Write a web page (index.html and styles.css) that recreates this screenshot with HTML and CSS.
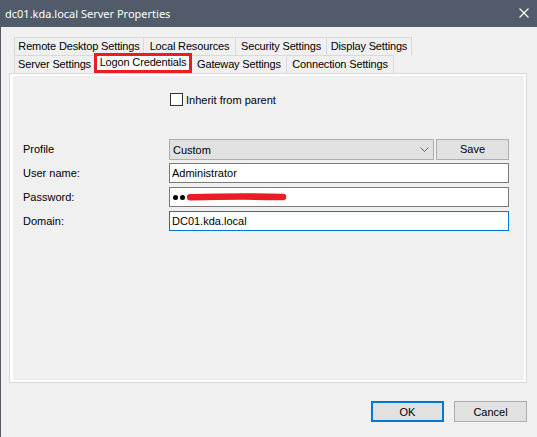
FILE: index.html
```html
<!DOCTYPE html>
<html>
<head>
<meta charset="utf-8">
<link rel="stylesheet" href="styles.css">
</head>
<body>
<div class="window">
  <div class="titlebar">
    <span class="title">dc01.kda.local Server Properties</span>
    <svg class="close" width="10" height="10" viewBox="0 0 10 10"><path d="M0.5 0.5 L9.5 9.5 M9.5 0.5 L0.5 9.5" stroke="#fff" stroke-width="1.1" fill="none"/></svg>
  </div>
  <div class="body">
    <div class="tabstrip">
      <div class="tab-row">
        <div class="tab w-remote">Remote Desktop Settings</div>
        <div class="tab w-local">Local Resources</div>
        <div class="tab w-security">Security Settings</div>
        <div class="tab w-display">Display Settings</div>
      </div>
      <div class="tab-row">
        <div class="tab w-server">Server Settings</div>
        <div class="tab tab-selected w-logon">Logon Credentials</div>
        <div class="tab w-gateway">Gateway Settings</div>
        <div class="tab w-connection">Connection Settings</div>
      </div>
    </div>
    <div class="panel">
      <div class="page">
        <div class="check-row">
          <span class="checkbox"></span>
          <span class="check-label">Inherit from parent</span>
        </div>
        <div class="form">
          <div class="label">Profile</div>
          <div class="profile-controls">
            <div class="combo">
              <span>Custom</span>
              <svg class="chevron" width="9" height="5" viewBox="0 0 9 5"><path d="M0.5 0.5 L4.5 4.5 L8.5 0.5" stroke="#5f5f5f" stroke-width="1" fill="none"/></svg>
            </div>
            <div class="button save">Save</div>
          </div>
          <div class="label">User name:</div>
          <div class="textbox">Administrator</div>
          <div class="label">Password:</div>
          <div class="textbox password">
            <span class="dot"></span><span class="dot"></span>
            <svg class="scribble" width="100" height="8" viewBox="0 0 100 8"><path d="M3 4.2 C 30 3.6, 70 3.4, 96 4" stroke="#ec1c24" stroke-width="6.6" stroke-linecap="round" fill="none"/></svg>
          </div>
          <div class="label">Domain:</div>
          <div class="textbox focused">DC01.kda.local</div>
        </div>
      </div>
    </div>
    <div class="buttons">
      <div class="button ok">OK</div>
      <div class="button">Cancel</div>
    </div>
  </div>
</div>
</body>
</html>
```

FILE: styles.css
```css
html, body {
  margin: 0;
  padding: 0;
}
body {
  width: 537px;
  height: 437px;
  overflow: hidden;
  font-family: "Liberation Sans", Arial, sans-serif;
  font-size: 11px;
  color: #000;
}
.window {
  box-sizing: border-box;
  width: 537px;
  height: 437px;
  background: #f0f0f0;
  border-left: 1px solid #515b6a;
  display: flex;
  flex-direction: column;
}
.titlebar {
  height: 27px;
  flex: none;
  background: #515b6a;
  display: flex;
  align-items: center;
  padding-left: 4px;
  padding-right: 8px;
  margin-left: -1px;
}
.title {
  font-family: "Noto Sans", "Liberation Sans", sans-serif;
  font-size: 11px;
  color: #fff;
  flex: 1;
  padding-left: 1px;
  margin-top: -1px;
}
.close {
  display: block;
  margin-top: -1px;
}
.body {
  padding: 10px 10px 0 8px;
  display: flex;
  flex-direction: column;
}
.tabstrip {
  margin-left: 5px;
}
.tab-row {
  display: flex;
  height: 18px;
}
.tab {
  box-sizing: border-box;
  height: 18px;
  border: 1px solid #d9d9d9;
  border-bottom: none;
  background: #f0f0f0;
  text-align: center;
  line-height: 17px;
  white-space: nowrap;
  letter-spacing: -0.15px;
  margin-left: -1px;
}
.tab:first-child {
  margin-left: 0;
}
.tab-selected {
  position: relative;
  z-index: 2;
  height: 20px;
  margin-top: -2px;
  border: 3px solid #ec1c24;
  background: #fff;
  line-height: 13px;
}
.w-remote { width: 130px; }
.w-local { width: 93px; }
.w-security { width: 92px; }
.w-display { width: 86px; }
.w-server { width: 81px; }
.w-logon { width: 98px; }
.w-gateway { width: 96px; }
.w-connection { width: 108px; }

.panel {
  box-sizing: border-box;
  width: 518px;
  height: 310px;
  border: 1px solid #d9d9d9;
  background: #fff;
  padding: 2px 2px 2px 3px;
  display: flex;
}
.page {
  flex: 1;
  background: #f0f0f0;
  padding-top: 17px;
}
.check-row {
  display: flex;
  align-items: center;
  height: 13px;
  padding-left: 157px;
}
.checkbox {
  box-sizing: border-box;
  width: 13px;
  height: 13px;
  border: 1px solid #333;
  background: #fff;
}
.check-label {
  margin-left: 3px;
}
.form {
  margin-top: 32px;
  padding-left: 10px;
  display: grid;
  grid-template-columns: 146px 340px;
  grid-template-rows: 21px 20px 20px 20px;
  row-gap: 4px;
  align-items: center;
}
.profile-controls {
  display: flex;
  gap: 2px;
  height: 21px;
  margin-bottom: -1px;
}
.combo {
  box-sizing: border-box;
  width: 265px;
  height: 21px;
  background: #e1e1e1;
  border: 1px solid #adadad;
  display: flex;
  align-items: center;
  padding-left: 3px;
  padding-right: 4px;
  padding-top: 1px;
}
.combo span {
  flex: 1;
}
.chevron {
  display: block;
  margin-top: -1px;
}
.button {
  box-sizing: border-box;
  width: 73px;
  height: 21px;
  background: #e1e1e1;
  border: 1px solid #adadad;
  display: flex;
  align-items: center;
  justify-content: center;
}
.save {
  padding-bottom: 1px;
}
.textbox {
  box-sizing: border-box;
  height: 20px;
  background: #fff;
  border: 1px solid #7a7a7a;
  display: flex;
  align-items: center;
  padding-left: 2px;
}
.textbox.focused {
  border-color: #0078d7;
}
.password {
  padding-left: 3px;
}
.dot {
  width: 5px;
  height: 5px;
  border-radius: 50%;
  background: #000;
  margin-right: 1.5px;
}
.scribble {
  display: block;
  margin-left: 1px;
}
.buttons {
  display: flex;
  justify-content: flex-end;
  gap: 10px;
  width: 518px;
  margin-top: 18px;
}
.ok {
  border: 2px solid #0078d7;
}
```
